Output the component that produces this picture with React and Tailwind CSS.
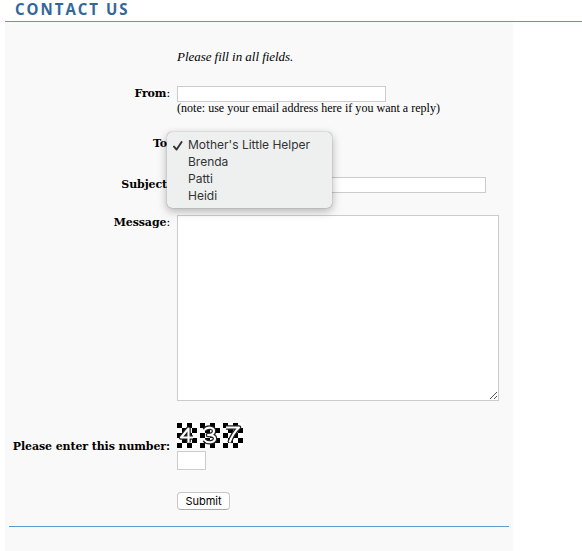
import React from 'react';

const people = ["Mother's Little Helper", 'Brenda', 'Patti', 'Heidi'];

function Label({ children, className = '' }) {
  return (
    <div className={`w-[165px] shrink-0 whitespace-nowrap text-right font-['DejaVu_Serif',serif] text-[11px] leading-4 font-bold tracking-[-0.1px] ${className}`}>
      {children}
    </div>
  );
}

function Row({ children, className = '' }) {
  return <div className={`flex gap-[7px] ${className}`}>{children}</div>;
}

function Digit({ d }) {
  const cells = [];
  for (let y = 0; y < 5; y++) {
    for (let x = 0; x < 4; x++) {
      if ((x + y) % 2 === 0) cells.push(<rect key={`${x}-${y}`} x={x * 5} y={y * 5} width="5" height="5" />);
    }
  }
  return (
    <svg width="20" height="25" viewBox="0 0 20 25" className="block bg-white">
      <g shapeRendering="crispEdges">{cells}</g>
      <path d={d} fill="none" stroke="#222" strokeWidth="4.6" strokeLinejoin="round" />
      <path d={d} fill="none" stroke="#fff" strokeWidth="2.1" strokeLinejoin="round" />
    </svg>
  );
}

export default function App() {
  return (
    <div className="h-[551px] w-[582px] overflow-hidden bg-white pl-[5px] font-['Liberation_Serif',serif] text-black">
      <h1 className="h-[22px] border-b border-[#6196cc] pl-[10px] font-['Open_Sans',sans-serif] text-[16.5px] leading-[18px] font-bold text-[#336699]">
        <span className="block w-fit origin-left scale-x-[0.91] tracking-[2.2px] whitespace-nowrap">CONTACT US</span>
      </h1>
      <main className="h-[529px] w-[508px] bg-[#f9f9f9] pt-[27px]">
        <Row>
          <Label />
          <p className="text-[13px] leading-4 tracking-[-0.04px] italic">Please fill in all fields.</p>
        </Row>
        <Row className="mt-5 h-[31px]">
          <Label className="pt-px">From<span className="font-normal">:</span></Label>
          <div className="pt-px">
            <div className="h-4 w-[209px] border border-[#ccc] bg-white" />
            <p className="text-[12px] leading-[13px] tracking-[0.02px] whitespace-nowrap">(note: use your email address here if you want a reply)</p>
          </div>
        </Row>
        <Row className="relative mt-[19px] h-4">
          <Label className="pt-px pr-[3px]">To</Label>
          <ul className="absolute top-[-3px] left-[162px] h-[76px] w-[165px] rounded-[5px] bg-[#eeefef] pt-1 pl-[21px] font-['Inter',sans-serif] text-[12px] leading-[17px] text-[#333] shadow-[0_0_1px_rgba(0,0,0,0.5),0_3px_10px_rgba(0,0,0,0.3)]">
            {people.map((name) => (
              <li key={name} className="whitespace-nowrap">{name}</li>
            ))}
            <svg className="absolute top-[9px] left-[6px]" width="10" height="10" viewBox="0 0 10 10">
              <path d="M1 5.6 3.6 8.6 8.6 1" fill="none" stroke="#333" strokeWidth="1.9" strokeLinecap="round" strokeLinejoin="round" />
            </svg>
          </ul>
        </Row>
        <Row className="mt-[25px] h-[17px]">
          <Label className="pt-px pr-[3px]">Subject</Label>
          <div className="mt-px h-4 w-[309px] border border-[#ccc] bg-white" />
        </Row>
        <Row className="mt-[22px]">
          <Label>Message<span className="font-normal">:</span></Label>
          <div className="flex h-[186px] w-[322px] items-end justify-end border border-[#ccc] bg-white p-px">
            <svg width="7" height="7" viewBox="0 0 7 7" shapeRendering="crispEdges" fill="#555">
              {[0, 1, 2, 3, 4, 5, 6].map((i) => <rect key={i} x={i} y={6 - i} width="1" height="1" />)}
              {[4, 5, 6].map((i) => <rect key={`s${i}`} x={i} y={10 - i} width="1" height="1" />)}
            </svg>
          </div>
        </Row>
        <Row className="mt-[22px]">
          <Label className="pt-4">Please enter this number:</Label>
          <div>
            <div className="flex gap-[3px]">
              <Digit d="M11.5 19.5V5.5L4 14.5H16" />
              <Digit d="M4.5 7C7 3.5 14 4 14 8C14 11 11 12 8 12C12 12 15 13 15 15.5C15 20 7 20.5 4.5 17" />
              <Digit d="M3 4.5H16Q10 10 6.5 19.5" />
            </div>
            <div className="mt-[3px] h-[19px] w-[29px] border border-[#ccc] bg-white" />
            <button className="mt-[22px] block h-[18px] w-[53px] rounded-[4px] border border-[#c6c6c6] border-b-[#aaa] bg-white font-['Inter',sans-serif] text-[11px] leading-4">
              Submit
            </button>
          </div>
        </Row>
        <div className="mx-1 mt-4 h-px bg-[#5b9bd0]" />
      </main>
    </div>
  );
}
